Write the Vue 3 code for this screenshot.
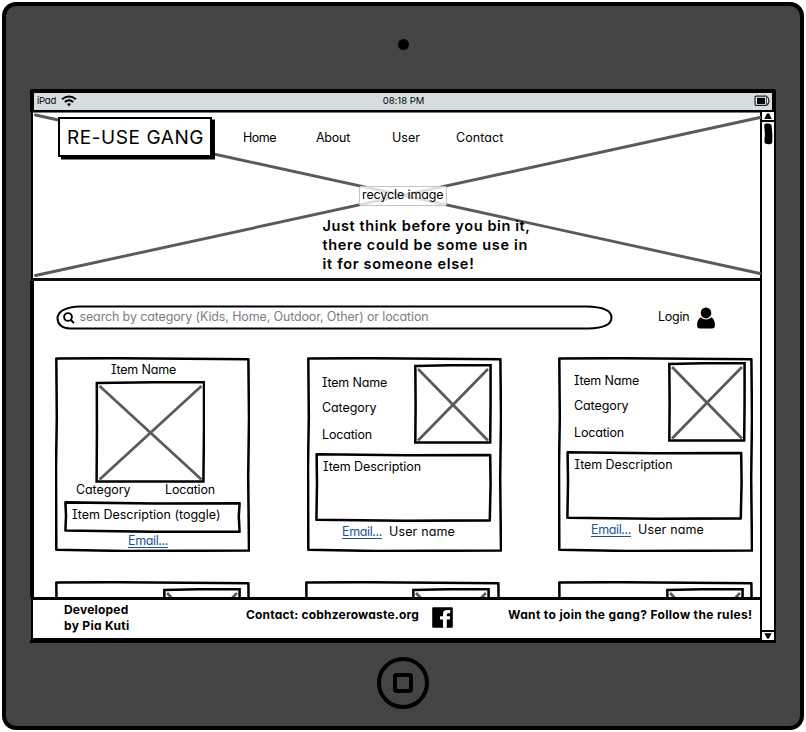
<script setup>
const nav = [
  { label: 'Home', width: 33 },
  { label: 'About', width: 34 },
  { label: 'User', width: 28 },
  { label: 'Contact', width: 47.5 },
]

const tagline = [
  { text: 'Just think before you bin it,', width: 208 },
  { text: 'there could be some use in', width: 205.5 },
  { text: 'it for someone else!', width: 152 },
]

const items = [
  { id: 1, kind: 'stacked' },
  { id: 2, kind: 'split' },
  { id: 3, kind: 'split raised' },
  { id: 4, kind: 'peek' },
  { id: 5, kind: 'peek shifted' },
  { id: 6, kind: 'peek' },
]

// Spreads a label's letters so that it takes the given width in pixels.
const vFit = {
  mounted(el, { value }) {
    const natural = el.getBoundingClientRect().width
    const count = [...el.textContent].length
    el.style.letterSpacing = `${(value - natural) / count}px`
  },
}
</script>

<template>
  <div class="device">
    <div class="camera"></div>

    <div class="screen">
      <div class="status">
        <span class="carrier">
          <span v-fit="19" class="fit">iPad</span>
          <svg class="wifi" width="16" height="12" viewBox="0 0 16 12">
            <path d="M1 4.2Q8-1.2 15 4.2M3.8 7Q8 3.4 12.2 7" fill="none" stroke="#000" stroke-width="2" />
            <path d="M6 9Q8 7.4 10 9L8 11.4Z" />
          </svg>
        </span>
        <span v-fit="41.5" class="fit">08:18 PM</span>
        <svg class="battery" width="16" height="12" viewBox="0 0 16 12">
          <path d="M2.2 1.2H12.4Q15 3 15 5.8T12.4 10.4H2.2Q1.1 10.4 1.1 9.3V2.3Q1.1 1.2 2.2 1.2Z" fill="#eef1f2" stroke="#222" stroke-width="1.2" />
          <path d="M12.4 2.4V9.4" stroke="#222" stroke-width=".9" />
          <rect x="3" y="2.8" width="8" height="6.2" />
        </svg>
      </div>

      <div class="body">
        <main class="page">
          <header class="hero">
            <svg class="hero-cross" viewBox="0 0 728 166" preserveAspectRatio="none">
              <path d="M2.5 3L727 161.5M2.5 163.5L727 5.5" />
            </svg>
            <div class="hero-top">
              <div class="logo"><span v-fit="137" class="fit">RE-USE GANG</span></div>
              <nav class="nav">
                <a v-for="n in nav" :key="n.label"><span v-fit="n.width" class="fit">{{ n.label }}</span></a>
              </nav>
            </div>
            <div class="image-tag"><span v-fit="81.5" class="fit">recycle image</span></div>
            <p class="tagline">
              <span v-for="t in tagline" :key="t.text" class="line"><span v-fit="t.width" class="fit">{{ t.text }}</span></span>
            </p>
          </header>

          <section class="content">
            <div class="tools">
              <div class="search">
                <svg class="pill" viewBox="0 0 557 25">
                  <path d="M24 1.4Q4 2 1.5 12Q1 22.6 14 23.6L532 23.6Q555.5 23 555.5 12.5T530 1.6Z" />
                </svg>
                <svg class="lens" width="12" height="12" viewBox="0 0 12 12">
                  <circle cx="5" cy="5" r="3.9" />
                  <path d="M7.8 7.8L11 11.2" />
                </svg>
                <span v-fit="349" class="fit">search by category (Kids, Home, Outdoor, Other) or location</span>
              </div>
              <a class="login">
                <span v-fit="31.5" class="fit">Login</span>
                <svg width="18" height="22" viewBox="0 0 18 22">
                  <ellipse cx="9" cy="5.9" rx="5.3" ry="5.5" />
                  <path d="M3.6 10.2Q9 14.6 14.4 10.2Q17.9 12 17.9 18.4Q17.9 21.4 15 21.4H3Q.1 21.4 .1 18.4Q.1 12 3.6 10.2Z" />
                </svg>
              </a>
            </div>

            <div class="cards">
              <article v-for="item in items" :key="item.id" class="card" :class="item.kind">
                <svg class="outline" viewBox="0 0 194 194" preserveAspectRatio="none">
                  <path d="M1.3 1.4L60 1.2L130 1.8L192.4 2.2L193 60L192.2 120L193 192.6L130 192.8L70 193L1.3 191.8L1 110L1.8 60Z" />
                </svg>

                <template v-if="item.kind === 'stacked'">
                  <h3><span v-fit="65" class="fit">Item Name</span></h3>
                  <svg class="photo" viewBox="0 0 109 101" preserveAspectRatio="none">
                    <path class="frame" d="M1.8 2L60 1.3L108 1.3L108 50L107.4 99.6L1.6 99.6L1.9 50Z" />
                    <path class="cross" d="M4.5 5L105.5 97.5M105.5 5L4.5 97.5" />
                  </svg>
                  <div class="meta">
                    <span v-fit="54.5" class="fit">Category</span>
                    <span v-fit="50" class="fit">Location</span>
                  </div>
                  <div class="desc">
                    <svg class="outline" viewBox="0 0 176 31" preserveAspectRatio="none">
                      <path d="M1.4 1.3L90 2.5L174.6 2.2L173.8 15L174.6 29.8L90 29.8L1.4 28.6L2 14Z" />
                    </svg>
                    <span v-fit="148.5" class="fit">Item Description (toggle)</span>
                  </div>
                  <div class="contact"><a class="mail"><span v-fit="40" class="fit">Email...</span></a></div>
                </template>

                <template v-else-if="item.kind.startsWith('split')">
                  <div class="summary">
                    <div class="fields">
                      <span><span v-fit="65" class="fit">Item Name</span></span>
                      <span><span v-fit="54.5" class="fit">Category</span></span>
                      <span><span v-fit="50" class="fit">Location</span></span>
                    </div>
                    <svg class="photo" viewBox="0 0 77 79" preserveAspectRatio="none">
                      <path class="frame" d="M1.3 2L35 1.3L75.6 1.3L75.6 40L75.2 77.6L1.3 77.6L1.6 40Z" />
                      <path class="cross" d="M4 5L73 75.5M73 5L4 75.5" />
                    </svg>
                  </div>
                  <div class="desc">
                    <svg class="outline" viewBox="0 0 176 68" preserveAspectRatio="none">
                      <path d="M1.6 1.3L90 2.3L174.2 2L174.6 30L173.8 66.4L90 66.8L1.4 65.8L2 30Z" />
                    </svg>
                    <span v-fit="98" class="fit">Item Description</span>
                  </div>
                  <div class="contact">
                    <a class="mail"><span v-fit="40" class="fit">Email...</span></a>
                    <span v-fit="66" class="fit">User name</span>
                  </div>
                </template>

                <svg v-else class="photo" viewBox="0 0 77 79" preserveAspectRatio="none">
                  <path class="frame" d="M1.3 2L35 1.3L75.6 1.3L75.6 40L75.2 77.6L1.3 77.6L1.6 40Z" />
                  <path class="cross" d="M4 5L73 75.5M73 5L4 75.5" />
                </svg>
              </article>
            </div>
          </section>

          <footer class="footer">
            <div class="credit">
              <span class="line"><span v-fit="64.5" class="fit">Developed</span></span>
              <span class="line"><span v-fit="65.5" class="fit">by Pia Kuti</span></span>
            </div>
            <div class="reach"><span v-fit="173" class="fit">Contact: cobhzerowaste.org</span></div>
            <svg class="facebook" width="21" height="21" viewBox="0 0 21 21">
              <rect width="20.6" height="20.6" x=".2" y=".2" rx="1" />
              <path d="M11 20.8V12.6H8V9.2H11V7.2Q11 3 15 3H18.2V6.2H16.2Q14.8 6.2 14.8 7.6V9.2H18.2L17.7 12.6H14.8V20.8Z" fill="#fff" />
            </svg>
            <div class="join"><span v-fit="244.5" class="fit">Want to join the gang? Follow the rules!</span></div>
          </footer>
        </main>

        <div class="scrollbar">
          <div class="cap top">
            <svg width="8" height="6" viewBox="0 0 8 6"><path d="M.3 6L2.6 1Q4 -.6 5.4 1L7.7 6Z" /></svg>
          </div>
          <div class="track">
            <svg width="9" height="22" viewBox="0 0 9 22"><path d="M.2 2Q.6 .2 4 .6Q7.6 .8 7.6 3L8.4 12L8.2 19Q8 21.4 4.6 21.2Q.4 21 .4 19L.9 11Z" /></svg>
          </div>
          <div class="cap bottom">
            <svg width="8" height="6" viewBox="0 0 8 6"><path d="M.3 .2H7.7L5 5.2Q4 6.4 3 5.2Z" /></svg>
          </div>
        </div>
      </div>
    </div>

    <div class="home"><div class="home-mark"></div></div>
  </div>
</template>

<style>
body {
  background: #fff;
}
#app {
  display: flow-root;
}
</style>

<style scoped>
* {
  box-sizing: border-box;
}
.device {
  margin: 2px 0 0 2px;
  width: 802px;
  height: 728px;
  border: 4px solid #000;
  border-radius: 14px;
  background: #444;
  display: flex;
  flex-direction: column;
  font-family: Inter, "Open Sans", "Liberation Sans", sans-serif;
  font-feature-settings: "cv11", "cv08";
  font-size: 12.5px;
  line-height: 19px;
  color: #000;
}
.fit {
  display: inline-block;
  white-space: nowrap;
}
.line {
  display: block;
}
.camera {
  width: 11px;
  height: 11px;
  margin: 32.5px 0 39.5px 391.5px;
  border-radius: 50%;
  background: #000;
}
.screen {
  width: 746px;
  height: 554px;
  margin-left: 24px;
  display: flex;
  flex-direction: column;
}
.status {
  height: 23px;
  border: 4px solid #000;
  border-bottom-width: 2px;
  border-radius: 2px 2px 0 0;
  background: #d6dde0;
  display: grid;
  grid-template-columns: 1fr auto 1fr;
  align-items: center;
  padding: 0 2px 0 3px;
  font-size: 9.5px;
  line-height: 16px;
}
.status .fit {
  margin-top: -2px;
}
.carrier {
  display: flex;
  align-items: center;
  gap: 5px;
}
.battery {
  justify-self: end;
  margin-top: -1px;
}
.wifi {
  margin-top: -1px;
}
.body {
  flex: 1;
  display: flex;
}
.page {
  width: 730px;
  display: flex;
  flex-direction: column;
  border-bottom: 3px solid #000;
}
.hero {
  position: relative;
  height: 169px;
  border-left: 2px solid #000;
  border-bottom: 3px solid #111;
  margin-left: 1px;
  background: #fff;
}
.hero::before {
  content: "";
  display: block;
  height: 1px;
  background: #777;
}
.hero-cross {
  position: absolute;
  left: 0;
  top: 0;
  width: 728px;
  height: 166px;
  fill: none;
  stroke: #5a5a5a;
  stroke-width: 2.9;
  stroke-linecap: round;
}
.hero-top {
  position: relative;
  display: flex;
  padding: 4px 0 0 25px;
}
.logo {
  width: 154px;
  height: 39.5px;
  border: 2px solid #000;
  background: #fff;
  box-shadow: 3px 2.5px 0 #000;
  display: flex;
  align-items: center;
  padding: 2px 0 0 7px;
  font-size: 19px;
}
.nav {
  display: grid;
  grid-template-columns: 73px 76px 64px 47px;
  margin-left: 31px;
  padding-top: 11px;
}
.image-tag {
  position: absolute;
  left: 326px;
  top: 74px;
  width: 88px;
  height: 20px;
  padding-left: 2px;
  border: 1px solid #c4c4c4;
  border-radius: 2px;
  background: rgba(255, 255, 255, 0.8);
  line-height: 16px;
}
.tagline {
  position: relative;
  margin: 59px 0 0 289.5px;
  font-size: 14.5px;
  font-weight: 600;
}
.content {
  height: 316px;
  border-left: 4px solid #000;
  padding: 24px 0 0 21px;
  overflow: hidden;
  background: #fff;
}
.tools {
  display: flex;
  align-items: center;
  height: 25px;
  margin-left: 1px;
}
.search {
  position: relative;
  width: 557px;
  height: 25px;
  display: flex;
  align-items: center;
  gap: 5px;
  padding: 0 0 2px 6.5px;
  color: #7d7d84;
}
.pill {
  position: absolute;
  left: 0;
  top: 0;
  width: 557px;
  height: 25px;
  fill: none;
  stroke: #000;
  stroke-width: 2;
}
.lens {
  fill: none;
  stroke: #000;
  stroke-width: 1.9;
  margin-top: 2px;
}
.login {
  display: flex;
  align-items: center;
  gap: 7px;
  margin-left: 45px;
}
.login .fit {
  margin-top: -2px;
}
.cards {
  display: grid;
  grid-template-columns: repeat(3, 194px);
  grid-template-rows: 194px 194px;
  column-gap: 57.5px;
  row-gap: 30px;
  margin-top: 27px;
}
.card {
  position: relative;
}
.outline {
  position: absolute;
  left: 0;
  top: 0;
  width: calc(100% + 1px);
  height: calc(100% + 1px);
  fill: none;
  stroke: #000;
  stroke-width: 2.5;
  stroke-linejoin: round;
}
.photo {
  display: block;
  width: 78px;
  height: 80px;
  fill: none;
}
.frame {
  stroke: #000;
  stroke-width: 2.5;
}
.cross {
  stroke: #5a5a5a;
  stroke-width: 2.7;
}
.stacked h3 {
  margin: 0 0 0 56px;
  padding-top: 3px;
  font: inherit;
}
.stacked .photo {
  width: 110px;
  height: 102px;
  margin: 1.5px 0 0 40px;
}
.meta {
  display: flex;
  gap: 34.5px;
  padding-left: 21px;
  margin-top: -2.5px;
}
.desc {
  position: relative;
  width: 176px;
  height: 68px;
  margin: 9px 0 0 8px;
  padding: 4px 0 0 8.5px;
}
.stacked .desc {
  height: 31px;
  margin: 1.5px 0 0 8.5px;
}
.contact {
  display: flex;
  gap: 7px;
  padding-left: 35.5px;
  margin-top: 1px;
}
.stacked .contact {
  padding-left: 73px;
  margin-top: -1px;
}
.mail {
  color: #1b5494;
  height: 17px;
  border-bottom: 1px solid #1b5494;
}
.summary {
  display: flex;
  padding: 7px 0 0 15.5px;
}
.fields {
  width: 91.5px;
  padding-top: 9px;
  display: grid;
  grid-template-rows: 25px 27px 18px;
  height: 79px;
}
.raised .summary {
  padding: 5px 0 0 16px;
}
.raised .fields {
  width: 93.5px;
}
.raised .contact {
  padding-left: 33px;
}
.peek {
  padding: 7px 0 0 107.5px;
}
.shifted {
  left: -2px;
}
.footer {
  flex: 1;
  margin-left: 1px;
  border: 2px solid #000;
  border-width: 3px 0 2px 2px;
  display: flex;
  font-size: 12px;
  font-weight: 700;
  line-height: 16px;
  padding-left: 31px;
  background: #fff;
}
.credit {
  width: 182px;
  padding-top: 2px;
}
.reach {
  width: 186px;
  padding-top: 7px;
}
.facebook {
  margin: 7px 0 0 -0.5px;
}
.join {
  margin-left: 55.5px;
  padding-top: 7px;
}
.scrollbar {
  width: 16px;
  border: solid #000;
  border-width: 0 2px 3px;
  background: #fff;
  display: flex;
  flex-direction: column;
}
.cap {
  height: 10px;
  display: grid;
  place-items: center;
}
.cap svg,
.track svg {
  display: block;
}
.top {
  border-bottom: 2px solid #000;
}
.bottom {
  border-top: 2px solid #000;
}
.track {
  flex: 1;
  padding: 1px 0 0 1.5px;
}
.home {
  width: 52px;
  height: 52px;
  margin: 14px 0 0 371px;
  border: 4px solid #000;
  border-radius: 50%;
  display: grid;
  place-items: center;
}
.home-mark {
  width: 20px;
  height: 20px;
  border: 4px solid #000;
  border-radius: 4px;
}
</style>
